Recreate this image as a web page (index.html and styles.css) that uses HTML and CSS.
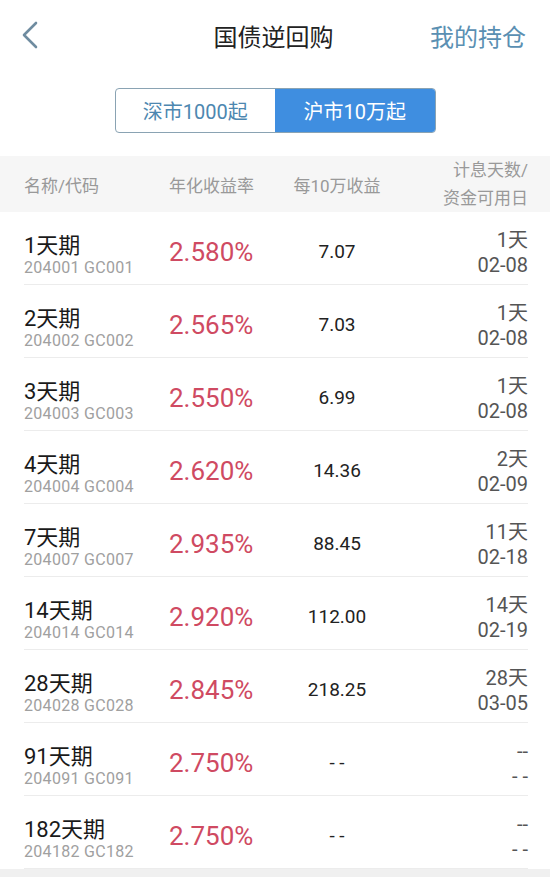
FILE: index.html
```html
<!DOCTYPE html>
<html lang="zh-CN">
<head>
  <meta charset="utf-8">
  <title>国债逆回购</title>
  <link rel="stylesheet" href="styles.css">
</head>
<body>
  <div class=page>
    <header class=nav>
      <a class=back href="#">
        <svg width="18" height="28" viewBox="0 0 18 28">
          <polyline points="15,2 3,14 15,26" fill="none" stroke="#6f8ca0" stroke-width="2.6" stroke-linecap="round" stroke-linejoin="round"/>
        </svg>
      </a>
      <h1 class=title>国债逆回购</h1>
      <a class=holdings href="#">我的持仓</a>
    </header>

    <div class=tabs>
      <div class=segment>
        <span class=seg>深市1000起</span>
        <span class="seg active">沪市10万起</span>
      </div>
    </div>

    <div class=thead>
      <div class=grid>
        <span>名称/代码</span>
        <span>年化收益率</span>
        <span class=c3>每10万收益</span>
        <span class=c4>计息天数/<br>资金可用日</span>
      </div>
    </div>

    <ul class=list>
      <li class=grid>
        <div class=name><b>1天期</b><small>204001 GC001</small></div>
        <div class=rate>2.580%</div>
        <div class="c3 gain">7.07</div>
        <div class="c4 days">1天<br>02-08</div>
      </li>
      <li class=grid>
        <div class=name><b>2天期</b><small>204002 GC002</small></div>
        <div class=rate>2.565%</div>
        <div class="c3 gain">7.03</div>
        <div class="c4 days">1天<br>02-08</div>
      </li>
      <li class=grid>
        <div class=name><b>3天期</b><small>204003 GC003</small></div>
        <div class=rate>2.550%</div>
        <div class="c3 gain">6.99</div>
        <div class="c4 days">1天<br>02-08</div>
      </li>
      <li class=grid>
        <div class=name><b>4天期</b><small>204004 GC004</small></div>
        <div class=rate>2.620%</div>
        <div class="c3 gain">14.36</div>
        <div class="c4 days">2天<br>02-09</div>
      </li>
      <li class=grid>
        <div class=name><b>7天期</b><small>204007 GC007</small></div>
        <div class=rate>2.935%</div>
        <div class="c3 gain">88.45</div>
        <div class="c4 days">11天<br>02-18</div>
      </li>
      <li class=grid>
        <div class=name><b>14天期</b><small>204014 GC014</small></div>
        <div class=rate>2.920%</div>
        <div class="c3 gain">112.00</div>
        <div class="c4 days">14天<br>02-19</div>
      </li>
      <li class=grid>
        <div class=name><b>28天期</b><small>204028 GC028</small></div>
        <div class=rate>2.845%</div>
        <div class="c3 gain">218.25</div>
        <div class="c4 days">28天<br>03-05</div>
      </li>
      <li class=grid>
        <div class=name><b>91天期</b><small>204091 GC091</small></div>
        <div class=rate>2.750%</div>
        <div class="c3 gain">- -</div>
        <div class="c4 days">--<br>- -</div>
      </li>
      <li class=grid>
        <div class=name><b>182天期</b><small>204182 GC182</small></div>
        <div class=rate>2.750%</div>
        <div class="c3 gain">- -</div>
        <div class="c4 days">--<br>- -</div>
      </li>
    </ul>
  </div>
</body>
</html>
```

FILE: styles.css
```css
html, body {
  margin: 0;
  padding: 0;
  background: #f0f0f0;
}
body {
  font-family: Roboto, 'Noto Sans CJK SC', sans-serif;
  color: #222;
}
.page {
  background: #fff;
}

.nav {
  display: grid;
  grid-template-columns: 1fr auto 1fr;
  align-items: center;
  height: 70px;
  padding: 0 24px 0 21px;
}
.back {
  display: flex;
  align-items: center;
}
.title {
  margin: 0;
  font-size: 24px;
  font-weight: normal;
  color: #222;
}
.holdings {
  justify-self: end;
  font-size: 24px;
  color: #5a8fb2;
  text-decoration: none;
}

.tabs {
  display: flex;
  justify-content: center;
  padding: 18px 0 23px;
}
.segment {
  display: flex;
  width: 321px;
  height: 45px;
  border: 1px solid #8aa3b3;
  border-radius: 4px;
  box-sizing: border-box;
  overflow: hidden;
}
.seg {
  flex: 1;
  display: flex;
  align-items: center;
  justify-content: center;
  font-size: 20px;
  color: #4d87b0;
}
.seg.active {
  background: #3f8ee0;
  color: #fff;
}

.grid {
  display: grid;
  grid-template-columns: 145px 100px 136px 1fr;
  align-items: center;
}
.c3 { text-align: center; }
.c4 { text-align: right; }

.thead {
  background: #f6f6f6;
  height: 56px;
  padding: 0 22px 0 24px;
  display: flex;
  align-items: center;
}
.thead .grid {
  width: 100%;
  font-size: 17px;
  color: #999;
}
.thead .c4 {
  line-height: 28px;
}

.list {
  list-style: none;
  margin: 0;
  padding: 0;
}
.list li {
  height: 73px;
  box-sizing: border-box;
  margin: 0 22px 0 24px;
  padding-top: 7px;
  border-bottom: 1px solid #ececec;
}
.name {
  padding-top: 8px;
}
.name b {
  display: block;
  font-weight: normal;
  font-size: 22px;
  line-height: 24px;
  color: #1a1a1a;
}
.name small {
  display: block;
  font-size: 16px;
  line-height: 20px;
  letter-spacing: 0.3px;
  color: #a0a0a0;
  white-space: nowrap;
}
.rate {
  font-size: 26px;
  color: #cf4a62;
}
.gain {
  font-size: 19px;
  color: #222;
}
.days {
  padding-top: 3px;
  font-size: 20px;
  line-height: 25px;
  color: #555;
}
```
